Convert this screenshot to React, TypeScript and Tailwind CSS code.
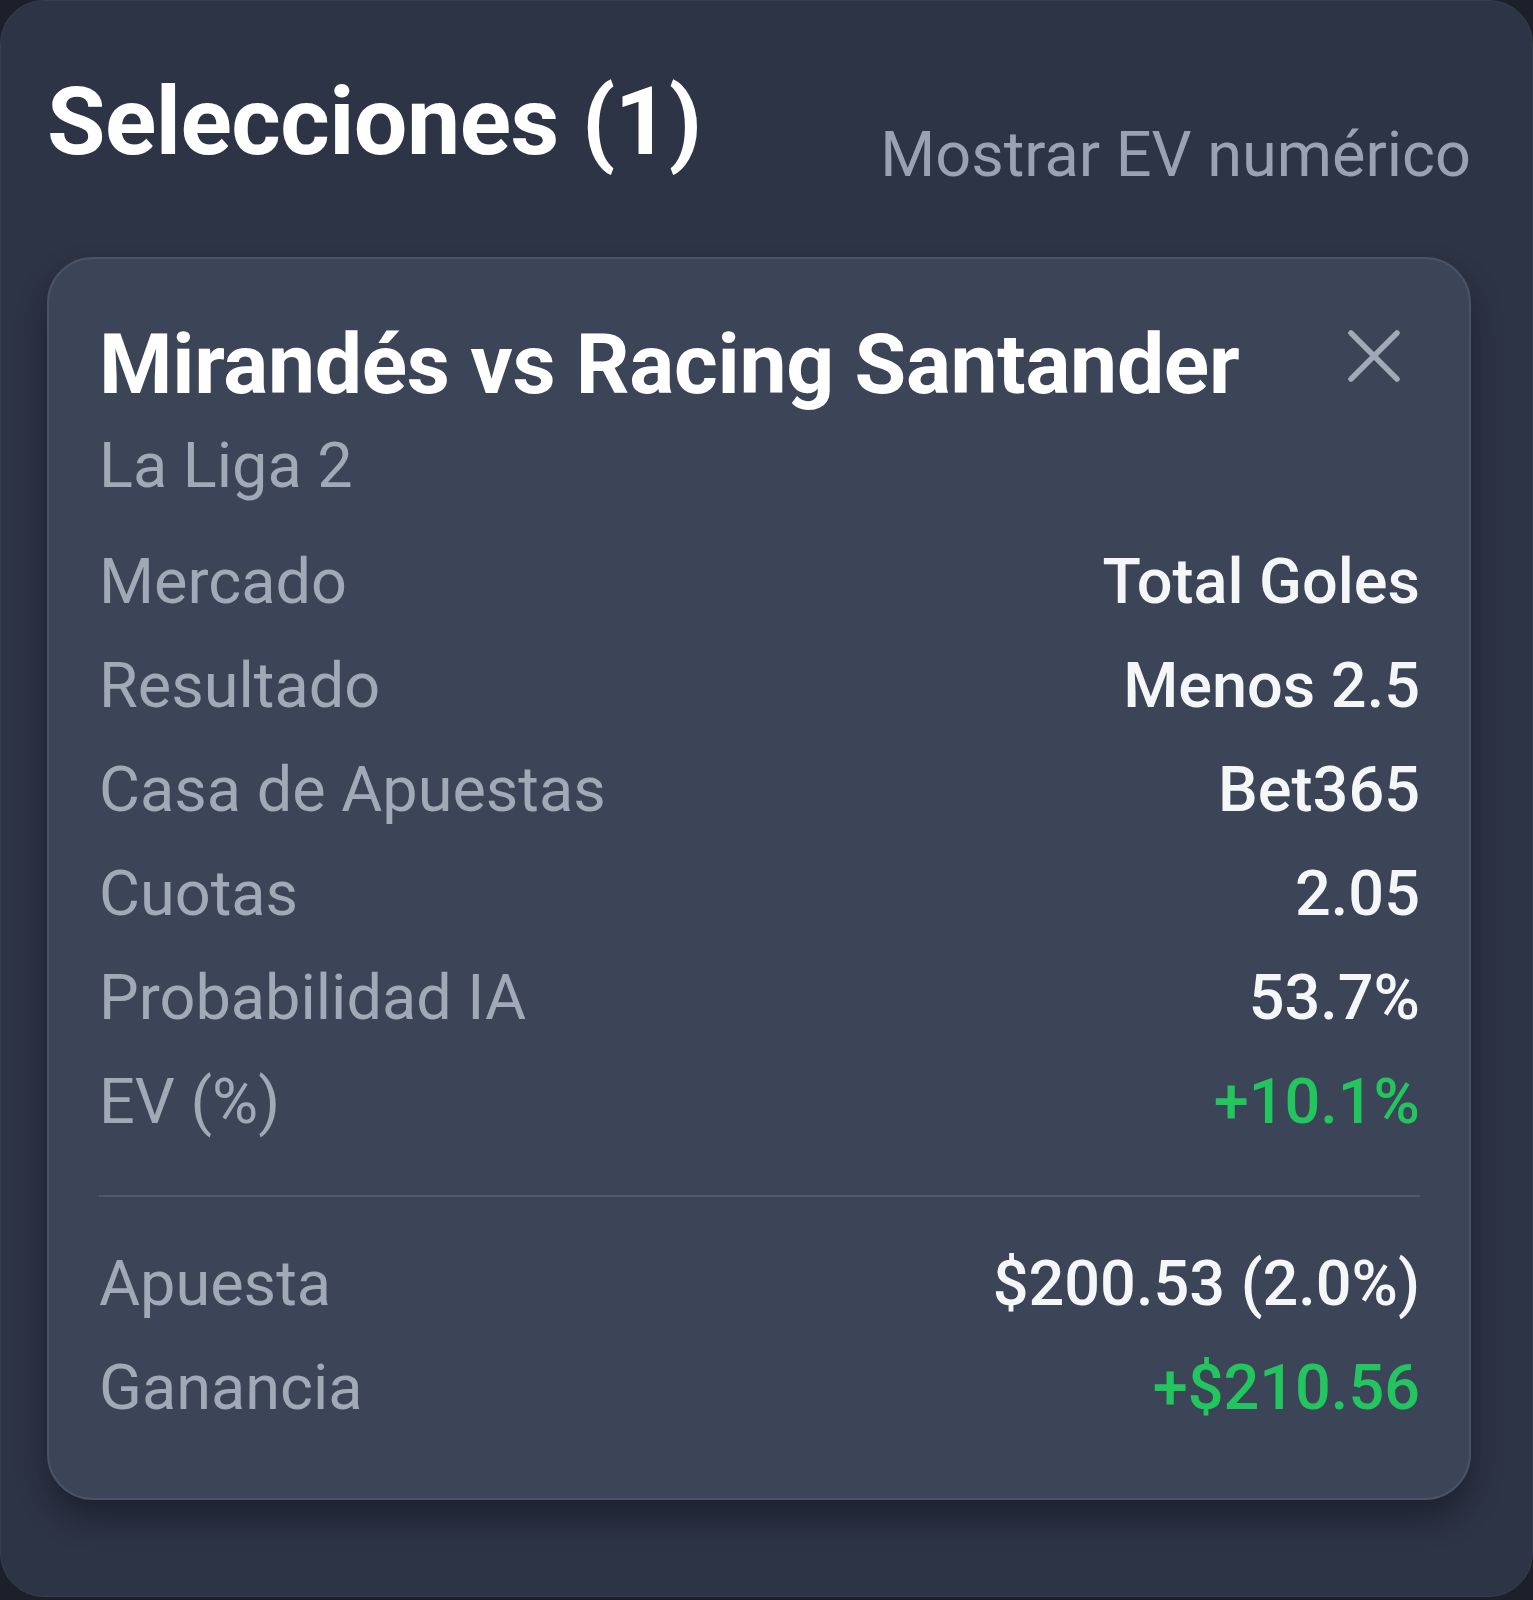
import React from "react"

const rows = [
  { label: "Mercado", value: "Total Goles" },
  { label: "Resultado", value: "Menos 2.5" },
  { label: "Casa de Apuestas", value: "Bet365" },
  { label: "Cuotas", value: "2.05" },
  { label: "Probabilidad IA", value: "53.7%" },
  { label: "EV (%)", value: "+10.1%", green: true },
]

function Row({ label, value, green }: { label: string; value: string; green?: boolean }) {
  return (
    <div className="flex items-center justify-between h-[104px] leading-[104px] text-[63px]">
      <span className="text-[#a1a9b7]">{label}</span>
      <span className={green ? "font-medium text-[#22c55e]" : "font-medium text-[#f5f6f8]"}>{value}</span>
    </div>
  )
}

export default function App() {
  return (
    <div className="min-h-[1600px] bg-[#1b202b]" style={{ fontFamily: "Roboto, 'Noto Sans', sans-serif" }}>
      <div className="h-[1597px] rounded-[44px] bg-[#2d3445] border border-[#363e50] pl-[46px] pr-[61px] pt-[71px]">
        {/* header */}
        <div className="flex items-start justify-between">
          <h1 className="text-[95px] leading-[100px] font-bold text-white tracking-[-0.5px]">Selecciones (1)</h1>
          <span className="pt-[49px] text-[63px] leading-[67px] text-[#9aa2b1]">Mostrar EV numérico</span>
        </div>

        {/* selection card */}
        <div className="mt-[69px] rounded-[46px] border-2 border-[#4a5366] bg-[#3b4557] shadow-[0_18px_30px_rgba(10,14,24,0.45)] pl-[50px] pr-[49px] pt-[62px] pb-[58px]">
          <div className="flex items-start justify-between">
            <h2 className="text-[84px] leading-[88px] font-bold text-white tracking-[-0.3px]">Mirandés vs Racing Santander</h2>
            <button className="mt-[8px] mr-[19px] text-[#a1a9b7]">
              <svg width="54" height="54" viewBox="0 0 54 54" fill="none" stroke="currentColor" strokeWidth="5.5" strokeLinecap="round">
                <path d="M4 4 L50 50" />
                <path d="M50 4 L4 50" />
              </svg>
            </button>
          </div>
          <div className="mt-[25px] text-[63px] leading-[63px] text-[#a1a9b7]">La Liga 2</div>

          <div className="mt-[33px]">
            {rows.map((r) => (
              <Row key={r.label} {...r} />
            ))}
          </div>

          <div className="mt-[41px] h-[2px] bg-[#4f596b]" />

          <div className="mt-[35px]">
            <Row label="Apuesta" value="$200.53 (2.0%)" />
            <Row label="Ganancia" value="+$210.56" green />
          </div>
        </div>
      </div>
    </div>
  )
}
